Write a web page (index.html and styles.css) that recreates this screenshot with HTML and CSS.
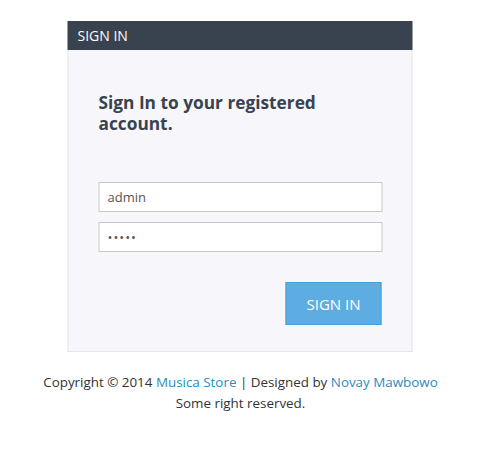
FILE: index.html
```html
<!DOCTYPE html>
<html>
<head>
<meta charset="utf-8">
<link rel="stylesheet" href="styles.css">
</head>
<body>
<div class="panel">
  <div class="panel-head">SIGN IN</div>
  <div class="panel-body">
    <h2 class="title">Sign In to your registered account.</h2>
    <form class="form">
      <input class="field" type="text" value="admin">
      <input class="field" type="password" value="admin">
      <div class="actions"><button class="btn" type="button">SIGN IN</button></div>
    </form>
  </div>
</div>
<footer class="footer">
  <div>Copyright © 2014 <a class="link" href="#">Musica Store</a> | Designed by <a class="link" href="#">Novay Mawbowo</a></div>
  <div>Some right reserved.</div>
</footer>
</body>
</html>
```

FILE: styles.css
```css
* { box-sizing: border-box; }
body {
  margin: 0;
  background: #fff;
  font-family: "Open Sans", "Noto Sans", sans-serif;
  color: #333;
}
.panel {
  width: 345px;
  margin: 21px auto 0;
  transform: translateX(-0.5px);
}
.panel-head {
  height: 29px;
  background: #39424f;
  color: #fff;
  font-size: 14px;
  line-height: 29px;
  padding-left: 10px;
}
.panel-body {
  background: #f7f7fb;
  border: 1px solid #e6e6ec;
  border-top: none;
  padding: 42px 29px 26px 30px;
}
.title {
  margin: 0 0 48px;
  font-size: 17.3px;
  line-height: 21px;
  font-weight: 700;
  color: #39424f;
  padding-right: 60px;
}
.form { display: flex; flex-direction: column; gap: 10px; }
.field {
  width: 284px;
  height: 30px;
  border: 1px solid #c8c8c8;
  background: #fff;
  padding: 0 8px;
  font-family: inherit;
  font-size: 13px;
  color: #555;
  outline: none;
}
.field[type=password] { letter-spacing: 1px; }
.actions { display: flex; justify-content: flex-end; padding-top: 20px; padding-right: 1px; }
.btn {
  width: 96px;
  height: 43px;
  background: #5dade2;
  border: 1px solid #4a9fd8;
  color: #fff;
  font-family: inherit;
  font-size: 15px;
}
.footer {
  text-align: center;
  font-size: 13.4px;
  line-height: 21px;
  margin-top: 20px;
  color: #333;
}
.link { color: #2e8bbd; text-decoration: none; }
```
